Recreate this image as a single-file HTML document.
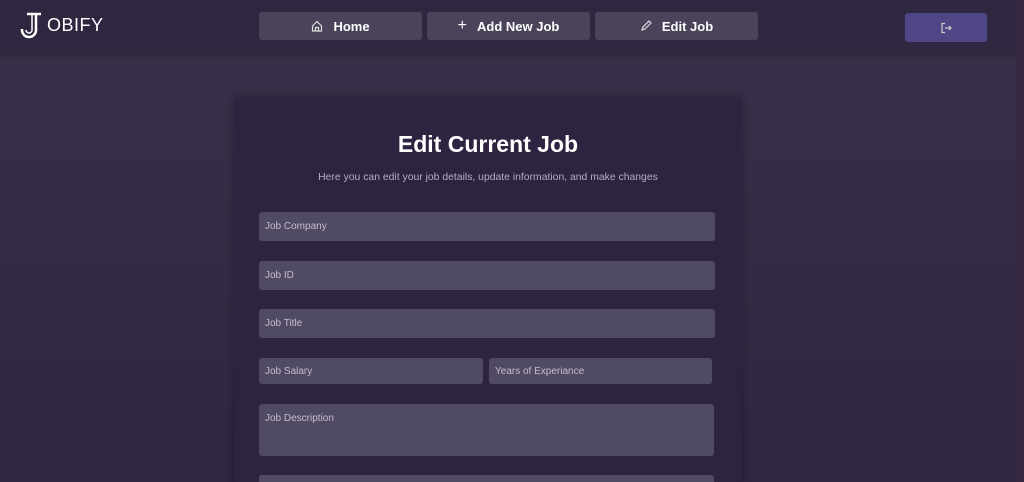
<!DOCTYPE html>
<html style="overflow:hidden;width:1024px;height:482px"><head><style>
*{box-sizing:border-box;margin:0;padding:0}
body{width:1024px;height:482px;overflow:hidden;background:linear-gradient(#3b3049,#2f2640);font-family:"Liberation Sans",sans-serif;position:relative}
.hdr{position:absolute;left:0;top:0;width:1024px;height:54px;background:#2f263f;box-shadow:0 2px 6px rgba(0,0,0,.25)}
.logo{position:absolute;left:19px;top:10px;color:#fff;font-size:18px;display:flex;align-items:center}
.nav{position:absolute;top:12px;height:28px;background:#4a4359;border-radius:3px;color:#fff;font-weight:bold;font-size:13px;display:flex;align-items:center;justify-content:center;gap:10px}
.out{position:absolute;left:905px;top:13px;width:82px;height:29px;background:#4f4785;border-radius:3px;display:flex;align-items:center;justify-content:center}
.card{position:absolute;left:234px;top:97px;width:508px;height:385px;background:#2e2340;box-shadow:0 0 8px rgba(0,0,0,.3);border-radius:3px;overflow:hidden}
h1{position:absolute;left:0;width:508px;top:34px;text-align:center;color:#fff;font-size:23px}
.sub{position:absolute;left:0;width:508px;top:75px;text-align:center;color:#b7adc6;font-size:10.4px}
.in{position:absolute;background:#514a63;border-radius:3px;color:#c4bdd0;font-size:10px;padding:9px 6px}
.sb{position:absolute;left:1016px;top:0;width:8px;height:482px;background:#35293f}
</style></head><body>
<div class="hdr"></div>
<div class="logo"><svg width="26" height="30" viewBox="0 0 26 30" fill="none" stroke="#fff" stroke-width="2.5"><path d="M8 4h14M17 4v16a7 7 0 0 1-14 0v-1"/><path d="M13 4v16a3 3 0 0 1-6 0" stroke-width="1.5"/></svg><span style="margin-left:2px;letter-spacing:0.5px">OBIFY</span></div>
<div class="nav" style="left:259px;width:163px"><svg width="12" height="12" viewBox="0 0 12 12" fill="none" stroke="#ddd" stroke-width="1.2"><path d="M1.5 6L6 1.5 10.5 6V11h-9z M4.5 11V7.5h3V11"/></svg>Home</div>
<div class="nav" style="left:427px;width:163px"><span style="font-weight:normal;font-size:16px">+</span>Add New Job</div>
<div class="nav" style="left:595px;width:163px"><svg width="12" height="12" viewBox="0 0 12 12" fill="none" stroke="#ddd" stroke-width="1.2"><path d="M2 10l1-3 6-6 2 2-6 6z"/></svg>Edit Job</div>
<div class="out"><svg width="12" height="12" viewBox="0 0 12 12" fill="none" stroke="#ccc" stroke-width="1.2"><path d="M5 1.5H2v9h3M5 6h6M9 4l2 2-2 2"/></svg></div>
<div class="card">
<h1>Edit Current Job</h1>
<div class="sub">Here you can edit your job details, update information, and make changes</div>
<div class="in" style="left:25px;top:115px;width:456px;height:29px">Job Company</div>
<div class="in" style="left:25px;top:164px;width:456px;height:29px">Job ID</div>
<div class="in" style="left:25px;top:212px;width:456px;height:29px">Job Title</div>
<div class="in" style="left:25px;top:261px;width:224px;height:26px;padding-top:8px">Job Salary</div>
<div class="in" style="left:255px;top:261px;width:223px;height:26px;padding-top:8px">Years of Experiance</div>
<div class="in" style="left:25px;top:307px;width:455px;height:52px">Job Description</div>
<div class="in" style="left:25px;top:378px;width:455px;height:30px"></div>
</div>
<div class="sb"></div>
</body></html>
